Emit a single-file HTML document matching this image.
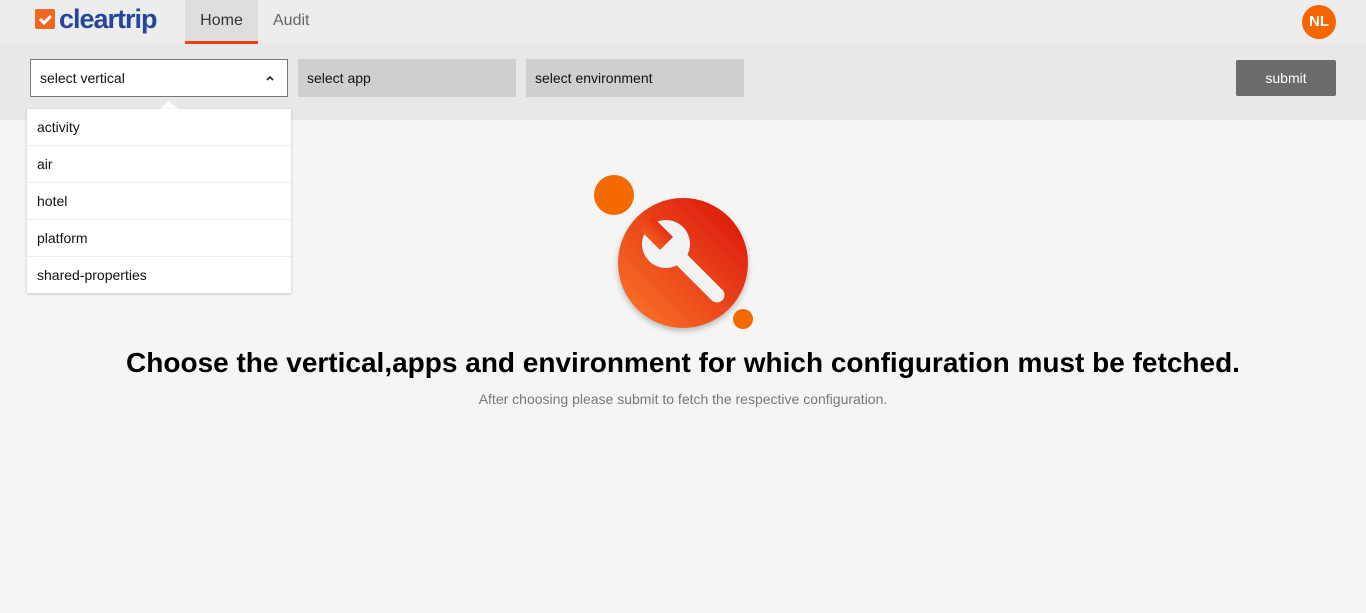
<!DOCTYPE html>
<html><head><style>
body{margin:0;width:1366px;height:613px;background:#f5f5f5;font-family:"Liberation Sans",Arial,sans-serif;position:relative;overflow:hidden}
.top{position:absolute;left:0;top:0;width:1366px;height:44px;background:#ededed}
.logo{position:absolute;left:35px;top:9px;width:20px;height:20px;background:#f26722;border-radius:2px}
.logotext{position:absolute;left:59px;top:4px;font-size:27px;font-weight:bold;color:#24469c;letter-spacing:-1px}
.home{position:absolute;left:185px;top:0;width:73px;height:41px;background:#dedede;border-bottom:3px solid #f0401a;font-size:16px;color:#333;text-align:center;line-height:42px}
.audit{position:absolute;left:273px;top:0;line-height:42px;font-size:16px;color:#666}
.av{position:absolute;left:1302px;top:5px;width:34px;height:34px;border-radius:50%;background:#f56500;color:#fff;font-weight:bold;font-size:15px;text-align:center;line-height:34px}
.bar{position:absolute;left:0;top:44px;width:1366px;height:76px;background:#e8e8e8}
.sel{position:absolute;top:59px;height:38px;box-sizing:border-box;font-size:14px;line-height:38px;padding-left:9px;color:#111}
.btn{position:absolute;left:1236px;top:60px;width:100px;height:36px;background:#6b6b6b;color:#fff;border-radius:2px;font-size:14px;text-align:center;line-height:36px}
.dd{position:absolute;left:27px;top:109px;width:264px;background:#fff;box-shadow:0 1px 3px rgba(0,0,0,.2)}
.dd div{height:36px;border-bottom:1px solid #eee;font-size:14px;line-height:36px;padding-left:10px;color:#111}
.h{position:absolute;left:0;width:1366px;text-align:center;top:347px;font-size:28px;font-weight:bold;color:#000}
.s{position:absolute;left:0;width:1366px;text-align:center;top:391px;font-size:14px;color:#777}
</style></head><body>
<div class="top"></div>
<div class="logo"><svg width="20" height="20"><path d="M5 10l4 4 7-7" stroke="#fff" stroke-width="3" fill="none"/></svg></div>
<div class="logotext">cleartrip</div>
<div class="home">Home</div>
<div class="audit">Audit</div>
<div class="av">NL</div>
<div class="bar"></div>
<div class="sel" style="left:30px;width:258px;background:#fff;border:1px solid #777;line-height:36px">select vertical<svg style="position:absolute;right:12px;top:14px" width="10" height="8"><path d="M2 6l3-3 3 3" stroke="#222" stroke-width="1.6" fill="none"/></svg></div>
<div class="sel" style="left:298px;width:218px;background:#cfcfcf">select app</div>
<div class="sel" style="left:526px;width:218px;background:#cfcfcf">select environment</div>
<div class="btn">submit</div>
<div style="position:absolute;left:160px;top:101px;width:0;height:0;border-left:9px solid transparent;border-right:9px solid transparent;border-bottom:8px solid #fff"></div>
<div class="dd"><div>activity</div><div>air</div><div>hotel</div><div>platform</div><div style="border:none">shared-properties</div></div>
<svg style="position:absolute;left:580px;top:170px" width="190" height="170">
<defs><linearGradient id="g" x1="0" y1="1" x2="1" y2="0"><stop offset="0" stop-color="#fb7a2a"/><stop offset="1" stop-color="#d9100a"/></linearGradient>
<filter id="f"><feDropShadow dx="0" dy="3" stdDeviation="3" flood-opacity=".25"/></filter></defs>
<circle cx="34" cy="25" r="20" fill="#f56a00"/>
<circle cx="103" cy="93" r="65" fill="url(#g)" filter="url(#f)"/>
<circle cx="163" cy="149" r="10" fill="#f56a00"/>
<path d="M86 74 L137 125" stroke="#f2f2f2" stroke-width="15" stroke-linecap="round"/>
<circle cx="86" cy="74" r="24" fill="#f2f2f2"/>
<path d="M60 60 L80 80 L93 67 L73 47 Z" fill="url(#g)"/>
</svg>
<div class="h">Choose the vertical,apps and environment for which configuration must be fetched.</div>
<div class="s">After choosing please submit to fetch the respective configuration.</div>
</body></html>
